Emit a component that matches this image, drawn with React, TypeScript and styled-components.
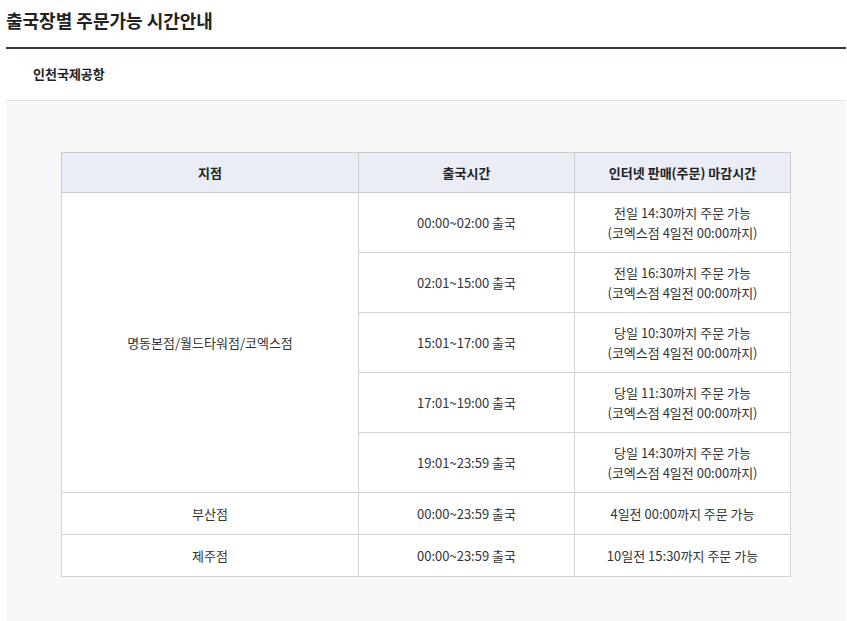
import React from "react";
import styled, { createGlobalStyle } from "styled-components";

const GlobalStyle = createGlobalStyle`
  html, body {
    margin: 0;
    padding: 0;
    background: #fff;
  }
  body {
    font-family: "Noto Sans CJK KR", "Noto Sans", sans-serif;
    color: #333;
  }
`;

const Page = styled.div`
  padding: 0 1px 0 6px;
`;

const Title = styled.h2`
  margin: 0;
  height: 47px;
  border-bottom: 2px solid #343a45;
  font-size: 18px;
  font-weight: 700;
  line-height: 40px;
  color: #222;
`;

const Tab = styled.div`
  height: 51px;
  padding-left: 27px;
  border-bottom: 1px solid #dde2e8;
  font-size: 13px;
  font-weight: 700;
  line-height: 50px;
  color: #222;
`;

const Panel = styled.div`
  background: #f8f8f8;
  padding: 51px 0 44px 55px;
`;

const Table = styled.table`
  width: 727px;
  border-collapse: collapse;
  background: #fff;
  table-layout: fixed;
`;

const Th = styled.th<{ $w: number }>`
  width: ${(p) => p.$w}px;
  height: 39px;
  padding: 0;
  background: #eaedf6;
  border: 1px solid #ccc;
  font-size: 13px;
  font-weight: 700;
  color: #222;
  text-align: center;
`;

const Td = styled.td<{ $tall?: boolean }>`
  height: ${(p) => (p.$tall ? 59 : 41)}px;
  padding: 0 6px;
  border: 1px solid #d3d3d3;
  font-size: 13px;
  line-height: 20px;
  color: #333;
  text-align: center;
  vertical-align: middle;
`;

const rows = [
  ["00:00~02:00 출국", "전일 14:30까지 주문 가능", "(코엑스점 4일전 00:00까지)"],
  ["02:01~15:00 출국", "전일 16:30까지 주문 가능", "(코엑스점 4일전 00:00까지)"],
  ["15:01~17:00 출국", "당일 10:30까지 주문 가능", "(코엑스점 4일전 00:00까지)"],
  ["17:01~19:00 출국", "당일 11:30까지 주문 가능", "(코엑스점 4일전 00:00까지)"],
  ["19:01~23:59 출국", "당일 14:30까지 주문 가능", "(코엑스점 4일전 00:00까지)"],
];

const App: React.FC = () => {
  return (
    <Page>
      <GlobalStyle />
      <Title>출국장별 주문가능 시간안내</Title>
      <Tab>인천국제공항</Tab>
      <Panel>
        <Table>
          <thead>
            <tr>
              <Th $w={296}>지점</Th>
              <Th $w={215}>출국시간</Th>
              <Th $w={215}>인터넷 판매(주문) 마감시간</Th>
            </tr>
          </thead>
          <tbody>
            {rows.map((r, i) => (
              <tr key={r[0]}>
                {i === 0 && <Td rowSpan={5}>명동본점/월드타워점/코엑스점</Td>}
                <Td $tall>{r[0]}</Td>
                <Td $tall>
                  {r[1]}
                  <br />
                  {r[2]}
                </Td>
              </tr>
            ))}
            <tr>
              <Td>부산점</Td>
              <Td>00:00~23:59 출국</Td>
              <Td>4일전 00:00까지 주문 가능</Td>
            </tr>
            <tr>
              <Td>제주점</Td>
              <Td>00:00~23:59 출국</Td>
              <Td>10일전 15:30까지 주문 가능</Td>
            </tr>
          </tbody>
        </Table>
      </Panel>
    </Page>
  );
};

export default App;
